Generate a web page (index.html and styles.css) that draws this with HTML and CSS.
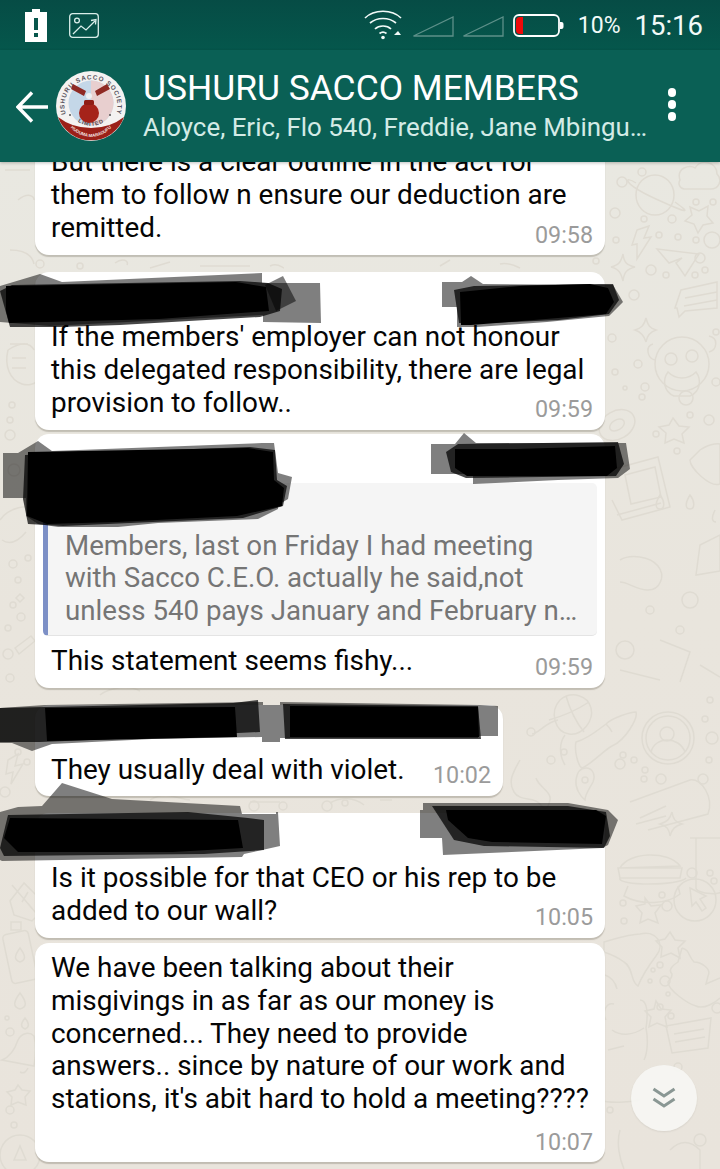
FILE: index.html
```html
<!DOCTYPE html>
<html lang="en">
<head>
<meta charset="utf-8">
<title>USHURU SACCO MEMBERS</title>
<link rel="stylesheet" href="styles.css">
</head>
<body>
<div class="phone">
  <header class="status">
    <div class="status-left">
      <svg class="ic-alert" viewBox="0 0 22 33"><path d="M7 0h8v3h7v30H0V3h7z" fill="#fff"/><path d="M9 9h4v12H9zM9 24h4v4H9z" fill="#07564c"/></svg>
      <svg class="ic-image" viewBox="0 0 30 25" fill="none" stroke="#d9eeea" stroke-width="1.3"><rect x=".7" y=".7" width="28.6" height="23.6" rx="3"/><circle cx="8" cy="7.5" r="2.4"/><path d="M4 21l8-8 5 4 9-9M22 7.5l5-1-.5 5"/></svg>
    </div>
    <div class="status-right">
      <svg class="ic-wifi" viewBox="0 0 38 30" fill="none" stroke="#f2faf8" stroke-width="1.7"><path d="M1 8C10-1 28-1 37 8M6 13c7-6 19-6 26 0M11 19c4-4 12-4 16 0M15.500 23.500c2-1.500 5-1.500 7 0"/><circle cx="19" cy="27.500" r="1.800" fill="#f2faf8" stroke="none"/><path d="M30 25l4-4 3 4z" fill="#f2faf8" stroke="none"/></svg>
      <svg class="ic-signal" viewBox="0 0 42 21" fill="none" stroke="#5d9089" stroke-width="1.300"><path d="M1.500 20L41 1v19z"/></svg>
      <svg class="ic-signal" viewBox="0 0 42 21" fill="none" stroke="#5d9089" stroke-width="1.300"><path d="M1.500 20L41 1v19z"/></svg>
      <svg class="ic-batt" viewBox="0 0 51 23"><rect x="1" y="1" width="45" height="21" rx="5" fill="none" stroke="#fff" stroke-width="1.800"/><path d="M3 7q0-4 4-4h3v17H7q-4 0-4-4z" fill="#ee0a0a"/><path d="M47 8h1.500q2 0 2 2v3q0 2-2 2H47z" fill="#fff"/></svg>
      <span class="pct">10%</span>
      <span class="clock">15:16</span>
    </div>
  </header>

  <div class="toolbar">
    <svg class="ic-back" viewBox="0 0 32 32" fill="none" stroke="#fff" stroke-width="3.400"><path d="M32 16H2M16 1.500L2 16l14 14.500"/></svg>
    <svg class="avatar" viewBox="0 0 70 70">
      <defs>
        <path id="arc-top" d="M12 48A26.500 26.500 0 1 1 58 48"/>
        <path id="arc-mid" d="M12 42Q35 68 58 42"/>
        <path id="arc-low" d="M8 50Q35 82 62 50"/>
      </defs>
      <circle cx="35" cy="35" r="35" fill="#f4f2f1"/>
      <circle cx="35" cy="32" r="22.500" fill="#c4d7e8"/>
      <path d="M35 9.500a22.500 22.500 0 0 1 0 45z" fill="#e8cfcf"/>
      <path d="M2 46a35 35 0 0 0 66 0q-14 11-33 11T2 46z" fill="#9b2018"/>
      <text class="logo-t"><textPath href="#arc-top" startOffset="50%" text-anchor="middle">USHURU SACCO SOCIETY</textPath></text>
      <text class="logo-m"><textPath href="#arc-mid" startOffset="50%" text-anchor="middle">LIMITED</textPath></text>
      <text class="logo-l"><textPath href="#arc-low" startOffset="50%" text-anchor="middle">HUDUMA MARADUFU</textPath></text>
      <circle cx="33" cy="42" r="10" fill="#a5231a"/>
      <rect x="28" y="29" width="10" height="5" rx="1.500" fill="#8f1d15"/>
      <path d="M17 13l13 7-2 5-13-7zM51 13l-12 7 2 5 13-7z" fill="#8f2a24"/>
      <circle cx="33" cy="25" r="3" fill="#eef0f2"/>
      <circle cx="14" cy="44" r="1" fill="#555"/><circle cx="54" cy="44" r="1" fill="#555"/>
    </svg>
    <div class="titles">
      <div class="title">USHURU SACCO MEMBERS</div>
      <div class="subtitle">Aloyce, Eric, Flo 540, Freddie, Jane Mbingu…</div>
    </div>
    <div class="menu"><i></i><i></i><i></i></div>
  </div>

  <main class="chat">
    <svg class="doodles" viewBox="0 0 720 1007" fill="none" stroke="#dfdbd2" stroke-width="1.500">
      <g transform="translate(0,-162)">
        <ellipse cx="655" cy="195" rx="19" ry="20"/><path d="M636 183c-12-8-15 0 20 16s34 14 19 3"/>
        <path d="M680 180c-4-12 10-16 15-12 6-10 22-6 22 6 6 6 2 16-8 15h-25c-5-1-6-6-4-9z"/>
        <path d="M690 207l9 4 9-5-1 10 6 7-10 2-5 8-4-9-9-3 7-6z"/>
        <path d="M637 230l12-4-5 12 7-1-14 22v-15l-5 1z"/>
        <path d="M657 249l42 5-14 22-9-13 6-5-13 5z"/>
        <path d="M623 254c1 8 3 11 12 13-8 2-11 5-12 14-2-8-4-12-12-14 8-2 10-5 12-13z"/>
        <g>
          <circle cx="622" cy="182" r="5"/><circle cx="642" cy="172" r="4"/><circle cx="615" cy="213" r="5"/><circle cx="644" cy="219" r="3"/><circle cx="672" cy="219" r="4"/><circle cx="696" cy="202" r="3"/><circle cx="713" cy="202" r="3"/><circle cx="616" cy="240" r="3"/><circle cx="659" cy="235" r="3"/><circle cx="678" cy="237" r="3"/><circle cx="696" cy="240" r="3"/><circle cx="712" cy="240" r="8"/><circle cx="700" cy="258" r="5"/><circle cx="705" cy="270" r="3"/><circle cx="651" cy="270" r="5"/><circle cx="666" cy="275" r="3"/><circle cx="695" cy="275" r="3"/><circle cx="596" cy="261" r="3"/>
        </g>
        <path d="M675 308l6-18 36-8v26l-32 3-6 6-2-9z"/><path d="M685 298l32-6M684 306l33-6"/>
        <path d="M646 318c2 8 4 10 10 12-6 2-9 5-10 12-2-7-5-10-11-12 6-2 9-4 11-12z"/>
        <circle cx="682" cy="364" r="27"/><circle cx="671" cy="359" r="6"/><circle cx="692" cy="356" r="6"/><path d="M668 372c-6 8-4 20 6 24h16c10-4 12-16 6-24-4 4-8 6-14 6s-10-2-14-6zM655 360c-8-2-10-14-2-16M709 352c8-2 10-14 0-16"/><circle cx="686" cy="398" r="7"/>
        <circle cx="634" cy="295" r="5"/><circle cx="638" cy="364" r="4"/><circle cx="612" cy="338" r="4"/><circle cx="645" cy="387" r="4"/><circle cx="642" cy="397" r="3"/><circle cx="615" cy="372" r="3"/><circle cx="625" cy="388" r="2"/><circle cx="716" cy="382" r="4"/><circle cx="716" cy="332" r="3"/>
        <ellipse cx="617" cy="425" rx="19" ry="14" transform="rotate(-30 617 425)"/><ellipse cx="617" cy="425" rx="8" ry="5" transform="rotate(-30 617 425)"/>
        <path d="M673 418l6 8 10 1-7 7 2 9-10-4-9 4 1-10-7-6 10-2z"/>
        <path d="M610 470l48-13 12 50-48 13-10-20"/><path d="M625 475l30-8 6 30-30 7z"/><path d="M617 515l44-12"/>
        <path d="M700 450c12-8 20-6 20-6v40c-10 4-30-16-30-24z"/><circle cx="677" cy="451" r="3"/><circle cx="709" cy="420" r="5"/><circle cx="690" cy="415" r="3"/><circle cx="656" cy="434" r="3"/><path d="M690 495c-5 8-5 14 0 14s5-8 0-14zM660 495c-5 8-5 14 0 14s5-8 0-14zM715 510c-4 8-3 12 1 12"/>
        <path d="M620 560c10-6 30-4 38 6s2 24-10 24-20-8-28-8"/><circle cx="650" cy="610" r="4"/><circle cx="690" cy="600" r="8"/><path d="M700 545l20-10v36l-24 4z"/><circle cx="625" cy="650" r="9"/><circle cx="680" cy="630" r="4"/><path d="M660 640l30 12-10 30"/><path d="M620 670l40 10M700 665l20 12"/>
        <path d="M560 700c12-10 28-4 31 8s-8 28-22 26-20-22-9-34zM549 720c14-4 28-10 40-18M566 696c4 14 10 26 18 36"/>
        <path d="M576 742c14-4 24-14 30-18 6-6 24-12 30-12 2 6-10 28-24 34-8 4-20 18-30 22-4-2-8-18-6-26z"/><path d="M606 724c2 2 5 6 6 8"/>
        <circle cx="668" cy="738" r="26"/><circle cx="668" cy="738" r="22"/><circle cx="667" cy="734" r="7"/><path d="M651 752c4-16 28-16 34 0"/>
        <path d="M558 720c-12 2-20 14-26 14M520 760c-8 14-12 22-6 32s20 4 26 12 8 4 10-4-12-14-14-22"/><path d="M565 735c-6 8-6 20 0 30"/><circle cx="531" cy="732" r="4"/><circle cx="551" cy="760" r="4"/><circle cx="564" cy="752" r="3"/>
        <path d="M586 768c6 0 10 6 7 14-3 6-8 12-8 18-5-4-10-12-9-20 1-8 5-12 10-12z"/><circle cx="585" cy="780" r="3"/>
        <circle cx="620" cy="764" r="5"/><circle cx="623" cy="755" r="3"/><circle cx="634" cy="760" r="3"/><circle cx="645" cy="770" r="3"/><circle cx="644" cy="779" r="3"/><circle cx="661" cy="779" r="5"/>
        <circle cx="712" cy="738" r="6"/><circle cx="705" cy="719" r="3"/><circle cx="709" cy="760" r="3"/><circle cx="703" cy="779" r="5"/><circle cx="710" cy="700" r="3"/>
        <path d="M630 802l60-22c12-2 24 18 18 34l-60 16M640 818l26-12M636 824l30-8"/>
        <path d="M672 812c1 7 3 10 10 12-7 2-10 5-12 12-1-7-3-10-10-12 7-2 10-5 12-12z"/>
        <path d="M620 868c8-16 48-18 60-2zM618 868h64l-2 10H620zM620 878c-4 8 60 8 66 0M628 886l-4 10c18 10 44 8 56-2l-2-8"/>
        <path d="M690 838h30M696 838v50c0 6 30 8 24 2"/>
        <circle cx="695" cy="900" r="21"/><path d="M690 888l16 8-6 3 6 9-4 3-6-9-4 4z"/>
        <circle cx="692" cy="873" r="5"/><circle cx="710" cy="873" r="3"/><circle cx="714" cy="881" r="3"/>
        <circle cx="667" cy="906" r="5"/><circle cx="662" cy="895" r="3"/><circle cx="623" cy="903" r="3"/><circle cx="624" cy="921" r="3"/>
        <path d="M645 898l6 8 10-1-6 8 3 10-10-4-8 4 2-10-6-7 9-2z"/>
        <path d="M670 932l5 8 10 1-7 7 2 10-9-5-10 4 1-10-6-6 9-2z"/>
        <path d="M604 942c14-4 26-8 36-8 16-4 26 10 16 22-6 8-14 20-18 30-8-4-4-18-14-24-8-6-14-8-20-10z"/><path d="M605 975c6 2 10 6 12 14"/>
        <path d="M682 948c8 2 6 8 12 14 6 0 18 6 14 14l-2 8 14-6M682 948l-4 14c-6 4-10 8-6 12 0 6-4 6-4 8 0 8 20 22 28 24 8 4 20-4 24-8"/>
        <circle cx="660" cy="965" r="3"/><circle cx="653" cy="970" r="2"/><circle cx="665" cy="981" r="5"/><circle cx="650" cy="981" r="2"/><circle cx="668" cy="994" r="2"/>
        <path d="M656 1001l5 8 10 1-6 7 2 10-10-4-8 4 2-10-6-6 9-2z"/>
        <circle cx="660" cy="1007" r="3"/><circle cx="671" cy="1016" r="3"/><circle cx="717" cy="1008" r="5"/>
        <path d="M666 1026l45-8-3 30-36 5z"/><path d="M674 1034l30-5M675 1042l30-5"/>
        <path d="M640 1000c8 0 8 16 6 28M606 1020c-4-8 0-18 8-16M646 1028c2 10 2 24-2 32M612 1030c8 6 20 6 32-2M608 1050l16-4"/>
        <circle cx="678" cy="1067" r="4"/>
        <path d="M600 1100c10 4 30 2 40 0M620 1130c-4 14 0 30 4 39M670 1150c10-10 20-10 30 0v20"/><circle cx="700" cy="1140" r="6"/><circle cx="610" cy="1110" r="3"/>
        <path d="M24 883l-14 18 4 14 18 6 4-4V895zM12 885l24 28M28 892l-6 10"/>
        <rect x="7" y="932" width="26" height="50" rx="4" transform="rotate(-12 20 957)"/><rect x="11" y="922" width="10" height="8"/><path d="M20 948c-6 8-6 12 0 14 6-2 6-6 0-14z"/>
        <path d="M20 993c-6 8-8 14 0 16 8-2 6-8 0-16zM25 1018c-4 5-5 9 0 11 5-2 4-6 0-11z"/><circle cx="10" cy="1032" r="4"/><circle cx="7" cy="1018" r="2"/>
        <path d="M2 1060c10-4 14-14 16-20 4-8 12-8 16-4 2 8 2 18 0 30zM20 1072c4 2 6 0 8-4"/>
        <path d="M18 1085l4 5 8 1-5 6 1 8-8-3-7 3 1-8-5-5 8-2z"/>
        <circle cx="10" cy="1110" r="4"/><circle cx="14" cy="1125" r="3"/>
        <circle cx="20" cy="1155" r="20"/><path d="M14 1160l6-14 6 14z"/>
        <circle cx="10" cy="302" r="3"/><path d="M8 350c12-8 22-8 26 0M8 350c-4 16 2 30 14 34 6 2 12 0 14-2"/><path d="M10 344h18M12 358h14M12 368h14"/><circle cx="12" cy="405" r="3"/><circle cx="10" cy="420" r="3"/><circle cx="10" cy="435" r="5"/>
        <path d="M18 200c10-8 16-4 16 0M5 170h25M10 250c14 0 22 4 24 14"/>
        <circle cx="14" cy="470" r="6"/><path d="M0 520c8-12 30-18 34-8M2 540c6 4 14 4 24-8"/><circle cx="13" cy="564" r="4"/><circle cx="28" cy="558" r="3"/><circle cx="18" cy="580" r="3"/><path d="M20 594l4 4-4 4-4-4z"/><circle cx="13" cy="605" r="3"/><circle cx="21" cy="617" r="4"/><circle cx="8" cy="628" r="3"/><path d="M15 648l16-12 4 5-16 13z"/><circle cx="8" cy="654" r="5"/><circle cx="10" cy="678" r="4"/>
        <path d="M8 760l10-6-3 12 8-2-12 20 2-12-7 2z"/><circle cx="5" cy="792" r="5"/><circle cx="27" cy="762" r="3"/><circle cx="18" cy="752" r="3"/>
        <path d="M100 695c10-8 30-10 40-4M150 800c16-10 30 0 40 0M250 802h30M330 803c10-6 24-6 34 2M380 800h12M430 806h30"/>
        <circle cx="254" cy="806" r="5"/><circle cx="283" cy="806" r="4"/><circle cx="327" cy="806" r="5"/><circle cx="345" cy="803" r="3"/>
        <circle cx="40" cy="264" r="4"/><circle cx="80" cy="266" r="3"/><path d="M115 263c8-6 14-2 12 2M150 268l20-6M200 266h50M270 266c8-4 12 2 14 2M440 266l10-6M500 264c8-2 16 2 20 4"/>
      </g>
    </svg>

    <article class="bubble bubble-first">
      <p class="text">But there is a clear outline in the act for<br>them to follow n ensure our deduction are<br>remitted.</p>
      <span class="time">09:58</span>
    </article>

    <article class="bubble bubble-new">
      <div class="sender"></div>
      <div class="row">
        <p class="text">If the members' employer can not honour<br>this delegated responsibility, there are legal<br>provision to follow..</p>
        <span class="time">09:59</span>
      </div>
    </article>

    <article class="bubble bubble-cont">
      <div class="sender"></div>
      <div class="quote">
        <p class="quote-text">Members, last on Friday I had meeting<br>with Sacco C.E.O. actually he said,not<br>unless 540 pays January and February n…</p>
      </div>
      <div class="row">
        <p class="text">This statement seems fishy...</p>
        <span class="time">09:59</span>
      </div>
    </article>

    <article class="bubble bubble-new bubble-short">
      <div class="sender"></div>
      <div class="row">
        <p class="text">They usually deal with violet.</p>
        <span class="time">10:02</span>
      </div>
    </article>

    <article class="bubble bubble-new">
      <div class="sender"></div>
      <div class="row">
        <p class="text">Is it possible for that CEO or his rep to be<br>added to our wall?</p>
        <span class="time">10:05</span>
      </div>
    </article>

    <article class="bubble bubble-cont bubble-plain">
      <p class="text">We have been talking about their<br>misgivings in as far as our money is<br>concerned... They need to provide<br>answers.. since by nature of our work and<br>stations, it's abit hard to hold a meeting????</p>
      <span class="time time-own">10:07</span>
    </article>

    <button class="scroll" type="button" aria-label="Scroll to bottom">
      <svg viewBox="0 0 24 22" fill="none" stroke="#8a9794" stroke-width="3"><path d="M1.500 2l10.500 7 10.500-7M1.500 12l10.500 7 10.500-7"/></svg>
    </button>
  </main>

  <svg class="redactions" viewBox="0 0 720 1169">
    <g class="soft">
      <path d="M0 286l40-12 22 8 200-9v10l58 0 1 40-58-1v-7L50 326 0 322z"/>
      <path d="M265 285l18-9 13 25-20 10z"/>
      <path d="M442 282h20l9-6 12 8 130 1 10 17-14 14-62 6-70 5-20 0v-20h-15z"/>
      <path d="M3 453h15l20-12 14 10 210-8 12 0 4 30 14 4-4 22-10 6 0 4-20 10-100 4-40 4-60 0-20-3-12-8V498H3z"/>
      <path d="M431 444h24l9-11 12 10h150l4 26-12 9-60 2-85 4v-10h-42z"/>
      <path d="M0 708l45-3 213-3 5 0v3h17v-3l200 3 18 1v30h-20v2H280v4h-18v-5l-110 2-100 5-20 7-20-8H0z"/>
      <path d="M0 812l18-5 24-1 20-23 50 16 128 7 2 8 34 0 0-2 2 0 2 34-36 8-2 3-240 4-2-1H0z"/>
      <path d="M423 803l145 0 40 7 10 10-10 25-6 3-159 7-1-17h-22v-28h3z"/>
    </g>
    <g class="mid">
      <path d="M0 291l12-6 228-4 28 2 14 6-2 22-20 6-140 8-60 2H10z"/>
      <path d="M454 290l20-4 125-2 14 0 6 16-10 14-50 6-70 3-30 0z"/>
      <path d="M25 455l225-8 25 3 2 30 10 6-4 20-40 12-180 8-35-2-5-25z"/>
      <path d="M446 452l12-8 160-2 6 22-8 12-150 2-15-6z"/>
      <path d="M0 708l233-5 25-3 2 32-120 6-100 4-40 0zM283 704l195 2 3 33H285z"/>
      <path d="M8 815l180-3 60 6 16 2v30l-60 4-200 2L0 848z"/>
      <path d="M432 806l136 0 38 6 4 24-6 12-120-2-30-6z"/>
    </g>
    <g class="core">
      <path d="M6 286l230-4 30 5 3 24-110 8-150 4-3-12z"/>
      <path d="M460 292l60-6 70-2 18 4 6 14-8 12-60 5-75 6h-10z"/>
      <path d="M28 452l220-4 25 4 1 28 10 8-2 18-45 10-120 6-70 2-20-8z"/>
      <path d="M455 449l60 0 100-3 2 22-10 8-140 0-12-8z"/>
      <path d="M45 708l190-1 2 30-190 4zM290 706l188 1 1 30H290z"/>
      <path d="M10 818l228 2 5 28-70 4-155 0L4 838z"/>
      <path d="M446 810h150l10 6-4 28-110-2-24-4-20-18z"/>
    </g>
  </svg>
</div>
</body>
</html>
```

FILE: styles.css
```css
* { box-sizing: border-box; }
html, body { margin: 0; padding: 0; }
body { font-family: Roboto, "Noto Sans", sans-serif; background: #e9e6de; }
p { margin: 0; }

.phone { position: relative; width: 720px; height: 1169px; overflow: hidden; display: flex; flex-direction: column; }

.status { height: 50px; flex: none; background: linear-gradient(#064c45, #05574c); display: flex; justify-content: space-between; align-items: center; color: #f2faf8; }
.status-left { display: flex; align-items: center; padding-left: 25px; gap: 22px; }
.ic-alert { width: 22px; height: 33px; }
.ic-image { width: 30px; height: 25px; }
.status-right { display: flex; align-items: center; padding-right: 17px; }
.ic-wifi { width: 38px; height: 30px; margin-right: 10px; }
.ic-signal { width: 42px; height: 21px; margin-right: 8px; margin-top: 3px; }
.ic-batt { width: 51px; height: 23px; margin: 1px 14px 0 1px; }
.pct { font-size: 23px; margin-right: 14px; }
.clock { font-size: 27.500px; }

.toolbar { height: 112px; flex: none; background: #0a6055; display: flex; align-items: center; position: relative; z-index: 2; box-shadow: 0 1px 3px rgba(0,0,0,.25); }
.ic-back { width: 32px; height: 32px; margin-left: 16px; margin-top: 2px; flex: none; }
.avatar { width: 70px; height: 70px; margin-left: 8px; flex: none; }
.logo-t { font: 700 6.400px "Liberation Sans", sans-serif; fill: #5a5560; letter-spacing: .9px; }
.logo-m { font: 700 5.600px "Liberation Sans", sans-serif; fill: #5a4a50; letter-spacing: .8px; }
.logo-l { font: 700 4.400px "Liberation Sans", sans-serif; fill: #f5e8e4; }
.titles { margin-left: 17px; flex: 1; min-width: 0; }
.title { font-size: 35.400px; line-height: 38px; margin-top: 1px; color: #fff; white-space: nowrap; }
.subtitle { font-size: 25.900px; line-height: 36px; margin-top: 2px; color: #d3ebe6; white-space: nowrap; }
.menu { display: flex; flex-direction: column; gap: 3.500px; margin-right: 44px; margin-top: -3px; }
.menu i { width: 8.500px; height: 8.500px; border-radius: 50%; background: #fff; display: block; }

.chat { flex: 1; min-height: 0; position: relative; background: linear-gradient(#e9e8e1, #e9e5dd 45%, #e9e4dc); display: flex; flex-direction: column; align-items: flex-start; padding-left: 35px; }
.doodles { position: absolute; left: 0; top: 0; width: 720px; height: 1007px; }

.bubble { position: relative; width: 570px; background: #fff; border-radius: 14px; padding: 7px 12px 6px 16px; box-shadow: 0 1.500px 1px rgba(120,115,100,.35); flex: none; display: grid; }
.bubble-first { margin-top: -23px; padding-bottom: 5px; }
.bubble-first .text { padding-bottom: 6px; }
.bubble-new { margin-top: 17px; }
.bubble-cont { margin-top: 4px; }
.bubble-plain { margin-top: 5px; padding-top: 9px; padding-bottom: 5px; }
.bubble-short { width: 468px; }
.bubble > .text, .bubble > .time { grid-area: 1 / 1; }
.bubble > .time-own { grid-area: 2 / 1; margin-top: 7px; }

.sender { height: 42px; }
.row { display: grid; }
.row > * { grid-area: 1 / 1; }
.text { font-size: 27.900px; line-height: 32.800px; color: #050505; white-space: nowrap; padding-bottom: 4px; }
.time { justify-self: end; align-self: end; font-size: 23.300px; line-height: 30px; color: #9b9b9b; }

.quote { margin: 0 -4px 9px -8px; height: 153px; background: #f5f5f5; border-left: 5px solid #7d90c6; border-bottom: 1px solid #e4e4e4; border-radius: 5px; padding: 47px 0 0 17px; }
.quote-text { font-size: 27.700px; line-height: 32.500px; color: #757575; white-space: nowrap; }

.scroll { position: absolute; left: 631px; top: 903px; width: 66px; height: 66px; border-radius: 50%; border: 0; padding: 0; background: rgba(246,246,243,.92); box-shadow: 0 1px 2px rgba(0,0,0,.08); display: flex; align-items: center; justify-content: center; }
.scroll svg { width: 24px; height: 22px; }

.redactions { position: absolute; left: 0; top: 0; width: 720px; height: 1169px; z-index: 3; pointer-events: none; filter: blur(.5px); }
.soft path { fill: rgba(0,0,0,.5); }
.mid path { fill: rgba(0,0,0,.72); }
.core path { fill: #000; }
```
